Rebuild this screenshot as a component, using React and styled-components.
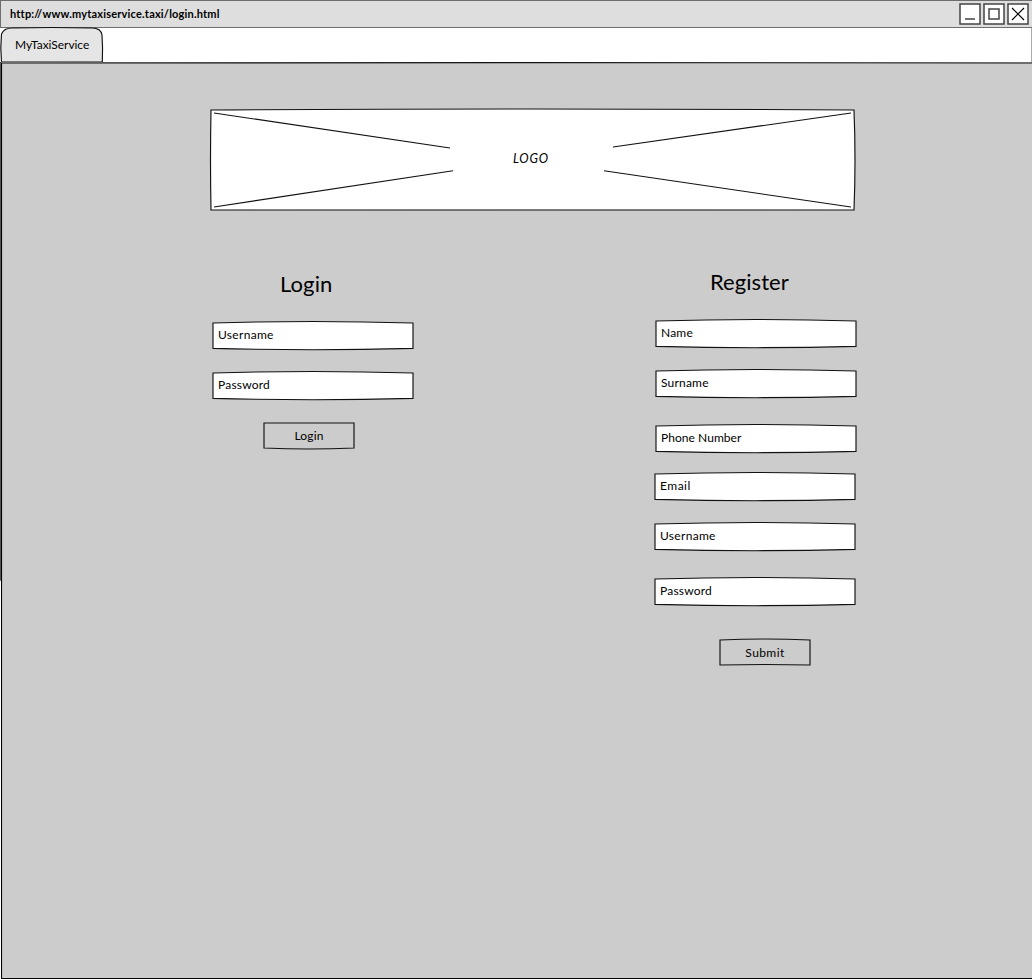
import React from 'react';
import styled, { createGlobalStyle } from 'styled-components';

const GlobalStyle = createGlobalStyle`
  * { box-sizing: border-box; }
  body { margin: 0; background: #fff; color: #000; font-family: Lato, Carlito, "Open Sans", sans-serif; }
  h1, h2 { margin: 0; font-weight: 400; }
`;

const Window = styled.div`
  position: relative;
  display: flex;
  flex-direction: column;
  width: 1032px;
  height: 979px;
  overflow: hidden;
`;

const TitleBar = styled.header`
  display: flex;
  align-items: center;
  justify-content: space-between;
  height: 28px;
  padding: 0 3px 0 9px;
  background: #dedede;
  border: 1px solid #6e6e6e;
  border-right-width: 0;
`;

const Address = styled.span`
  font-size: 11px;
  line-height: 14px;
  font-weight: 700;
  letter-spacing: ${(p) => p.$spacing}px;
  white-space: nowrap;
`;

const Controls = styled.div`
  display: flex;
  gap: 2px;
`;

const ControlIcon = styled.svg`
  display: block;
  width: 22px;
  height: 22px;
  fill: none;
  stroke: #000;
`;

const TabBar = styled.nav`
  height: 34px;
  border-right: 1px solid #aaa;
`;

const Tab = styled.div`
  position: relative;
  display: flex;
  align-items: center;
  width: 103px;
  height: 34px;
  padding-left: 15px;
`;

const Sketch = styled.svg`
  position: absolute;
  left: 0;
  top: 0;
  overflow: visible;
  fill: ${(p) => p.$fill || 'none'};
  stroke: #111;
  stroke-width: 1.15;
  pointer-events: none;
`;

const Text = styled.span`
  position: relative;
  font-size: ${(p) => p.$size || 12}px;
  line-height: 16px;
  letter-spacing: ${(p) => p.$spacing || 0}px;
  font-style: ${(p) => (p.$italic ? 'italic' : 'normal')};
  white-space: nowrap;
`;

const Page = styled.main`
  position: relative;
  flex: 1;
  padding: 48px 176px 0 211px;
  background: #ccc;
`;

const Logo = styled.div`
  position: relative;
  display: flex;
  align-items: center;
  width: 643px;
  height: 100px;
  padding: 0 0 2px 302px;
`;

const Columns = styled.div`
  display: flex;
  justify-content: space-between;
  align-items: flex-start;
  padding-left: 2px;
`;

const Form = styled.form`
  display: flex;
  flex-direction: column;
  width: ${(p) => p.$width}px;
  padding-top: ${(p) => p.$top}px;
`;

const Heading = styled.h2`
  font-size: 22px;
  line-height: 30px;
  letter-spacing: ${(p) => p.$spacing}px;
  margin: 0 0 ${(p) => p.$below}px ${(p) => p.$indent}px;
  white-space: nowrap;
`;

const FieldBox = styled.label`
  position: relative;
  display: flex;
  align-items: center;
  width: 200px;
  height: 25px;
  padding: 0 0 2px 5px;
  margin: ${(p) => p.$above || 0}px 0 0 ${(p) => p.$indent || 0}px;
`;

const ButtonBox = styled.button`
  position: relative;
  width: 90px;
  height: 25px;
  padding: 0;
  margin: ${(p) => p.$above}px 0 0 ${(p) => p.$indent}px;
  border: 0;
  background: none;
  color: inherit;
  font-family: inherit;
  text-align: center;
`;

function Field({ label, spacing, above, indent }) {
  return (
    <FieldBox $above={above} $indent={indent}>
      <Sketch width="200" height="25" $fill="#fff">
        <path d="M0 0Q100-3 200 0V25.4Q100 28 0 25.4Z" />
      </Sketch>
      <Text $spacing={spacing}>{label}</Text>
    </FieldBox>
  );
}

function Button({ label, spacing, above, indent, shape }) {
  return (
    <ButtonBox type="button" $above={above} $indent={indent}>
      <Sketch width="90" height="25">
        <path d={shape} />
      </Sketch>
      <Text $spacing={spacing}>{label}</Text>
    </ButtonBox>
  );
}

export default function App() {
  return (
    <>
      <GlobalStyle />
      <Window>
        <TitleBar>
          <Address $spacing={0.19}>http://www.mytaxiservice.taxi/login.html</Address>
          <Controls>
            <ControlIcon viewBox="0 0 22 22">
              <path d="M1 1H21V21H1Z" fill="#fff" stroke="#444" strokeWidth="1.5" />
              <path d="M6 16H16" stroke="#444" strokeWidth="1.5" />
            </ControlIcon>
            <ControlIcon viewBox="0 0 22 22">
              <path d="M1 1H21V21H1Z" fill="#fff" stroke="#444" strokeWidth="1.5" />
              <path d="M6 6H16V16H6Z" stroke="#444" strokeWidth="1.5" />
            </ControlIcon>
            <ControlIcon viewBox="0 0 22 22">
              <path d="M1 1H21V21H1Z" fill="#fff" stroke="#444" strokeWidth="1.5" />
              <path d="M5 5L17 17M17 5L5 17" strokeWidth="1.2" />
            </ControlIcon>
          </Controls>
        </TitleBar>
        <TabBar>
          <Tab>
            <Sketch width="103" height="35" $fill="#e5e5e5">
              <path d="M1.5 34L.8 20L1.5 6Q4 0 12 0Q52-1 92 0Q101 0 102 7Q103 20 102.3 34Z" />
            </Sketch>
            <Text $spacing={-0.05}>MyTaxiService</Text>
          </Tab>
        </TabBar>
        <Page>
          <Sketch width="1032" height="917">
            <path d="M0 1Q516 .2 1032 1" />
            <path d="M1.5 1V916.5H1032" stroke="#000" />
            <path d="M.5 0V518.5" stroke="#555" strokeWidth="1" />
            <path d="M.5 519V917" stroke="#fff" strokeWidth="1" />
          </Sketch>
          <Logo>
            <Sketch width="643" height="100" $fill="#fff">
              <path d="M0 0Q321-2 643 0Q645 50 643 100Q321 99 0 100Q-1 50 0 0Z" />
              <path d="M3 3L239 38M3 97L242 60.8M402 37L640 3M393 60.8L640 97" />
            </Sketch>
            <Text $italic $size={12.5} $spacing={0.8}>LOGO</Text>
          </Logo>
          <Columns>
            <Form $width={200} $top={59}>
              <Heading $indent={67} $below={24} $spacing={0.1}>Login</Heading>
              <Field label="Username" spacing={0.3} />
              <Field label="Password" spacing={0.2} above={25} />
              <Button label="Login" spacing={0.15} above={25} indent={51} shape="M0 0H90V25Q45 27 0 25Z" />
            </Form>
            <Form $width={201} $top={57}>
              <Heading $indent={55} $below={24} $spacing={0.05}>Register</Heading>
              <Field label="Name" spacing={0.2} indent={1} />
              <Field label="Surname" spacing={0.2} above={25} indent={1} />
              <Field label="Phone Number" spacing={0.05} above={30} indent={1} />
              <Field label="Email" spacing={0.5} above={23} />
              <Field label="Username" spacing={0.3} above={25} />
              <Field label="Password" spacing={0.2} above={30} />
              <Button label="Submit" spacing={0.4} above={36} indent={65} shape="M0 0Q45-2 90 0V25Q45 24 0 25Z" />
            </Form>
          </Columns>
        </Page>
      </Window>
    </>
  );
}
